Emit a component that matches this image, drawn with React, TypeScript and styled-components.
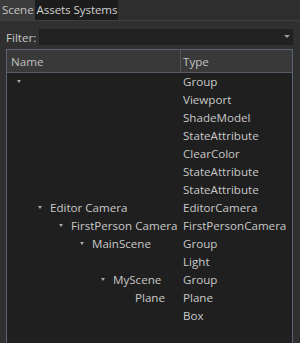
import styled, { createGlobalStyle } from "styled-components";

const GlobalStyle = createGlobalStyle`
  html, body {
    margin: 0;
    padding: 0;
    background: #303030;
  }
  body {
    font-family: "Open Sans", "Noto Sans", sans-serif;
    font-size: 11.6px;
    color: #c8c8c8;
    overflow: hidden;
  }
`;

const Page = styled.div`
  width: 300px;
  height: 343px;
  background: #303030;
  display: flex;
  flex-direction: column;
  overflow: hidden;
`;

const TabBar = styled.div`
  display: flex;
  height: 20px;
  border-bottom: 1px solid #3e3e3e;
  background: #2e2e2e;
`;

const Tab = styled.div<{ active?: boolean }>`
  display: flex;
  align-items: center;
  padding: 0 1px 0 2px;
  height: 20px;
  line-height: 20px;
  background: ${({ active }) => (active ? "#3b3b3b" : "#1c1c1c")};
  color: ${({ active }) => (active ? "#c4c4c4" : "#d0d0d0")};
  letter-spacing: -0.1px;
`;

const FilterRow = styled.div`
  display: flex;
  align-items: center;
  padding: 8px 4px 0 6px;
  gap: 3px;
  height: 16px;
`;

const FilterLabel = styled.span`
  color: #c8c8c8;
`;

const Combo = styled.div`
  flex: 1;
  height: 16px;
  background: #212121;
  position: relative;
  margin-right: 3px;
`;

const ComboArrow = styled.span`
  position: absolute;
  right: 3px;
  top: 6px;
  width: 0;
  height: 0;
  border-left: 3px solid transparent;
  border-right: 3px solid transparent;
  border-top: 3px solid #9a9a9a;
`;

const Frame = styled.div`
  margin: 4px 7px 0 6px;
  flex: 1;
  border: 1px solid #5b6571;
  border-bottom: none;
  background: #1f1f1f;
  display: flex;
  flex-direction: column;
`;

const Header = styled.div`
  display: grid;
  grid-template-columns: 173px 1fr;
  height: 22px;
  background: #393939;
  border-bottom: 1px solid #545c66;
`;

const HeaderCell = styled.div<{ divider?: boolean }>`
  display: flex;
  align-items: center;
  padding-left: ${({ divider }) => (divider ? "2px" : "4px")};
  border-left: ${({ divider }) => (divider ? "1px solid #555" : "none")};
  color: #c0c0c0;
`;

const Row = styled.div`
  display: grid;
  grid-template-columns: 173px 1fr;
  height: 18px;
  line-height: 18px;
`;

const NameCell = styled.div`
  display: flex;
  align-items: center;
  white-space: nowrap;
`;

const Arrow = styled.span`
  display: inline-block;
  width: 0;
  height: 0;
  border-left: 2.5px solid transparent;
  border-right: 2.5px solid transparent;
  border-top: 3px solid #a8a8a8;
  margin-right: 8px;
  margin-top: -2px;
`;

const ArrowSlot = styled.span`
  display: inline-block;
  width: 13px;
`;

const TypeCell = styled.div`
  padding-left: 3px;
  white-space: nowrap;
`;

interface Node {
  name: string;
  type: string;
  level: number;
  open?: boolean;
}

const nodes: Node[] = [
  { name: "", type: "Group", level: 0, open: true },
  { name: "", type: "Viewport", level: 1 },
  { name: "", type: "ShadeModel", level: 1 },
  { name: "", type: "StateAttribute", level: 1 },
  { name: "", type: "ClearColor", level: 1 },
  { name: "", type: "StateAttribute", level: 1 },
  { name: "", type: "StateAttribute", level: 1 },
  { name: "Editor Camera", type: "EditorCamera", level: 1, open: true },
  { name: "FirstPerson Camera", type: "FirstPersonCamera", level: 2, open: true },
  { name: "MainScene", type: "Group", level: 3, open: true },
  { name: "", type: "Light", level: 4 },
  { name: "MyScene", type: "Group", level: 4, open: true },
  { name: "Plane", type: "Plane", level: 5 },
  { name: "", type: "Box", level: 5 },
];

export default function App() {
  return (
    <Page>
      <GlobalStyle />
      <TabBar>
        <Tab active>Scene</Tab>
        <Tab>Assets</Tab>
        <Tab>Systems</Tab>
      </TabBar>
      <FilterRow>
        <FilterLabel>Filter:</FilterLabel>
        <Combo>
          <ComboArrow />
        </Combo>
      </FilterRow>
      <Frame>
        <Header>
          <HeaderCell>Name</HeaderCell>
          <HeaderCell divider>Type</HeaderCell>
        </Header>
        {nodes.map((n, i) => (
          <Row key={i}>
            <NameCell style={{ paddingLeft: 10 + n.level * 21 }}>
              {n.open ? <Arrow /> : <ArrowSlot />}
              {n.name}
            </NameCell>
            <TypeCell>{n.type}</TypeCell>
          </Row>
        ))}
      </Frame>
    </Page>
  );
}
